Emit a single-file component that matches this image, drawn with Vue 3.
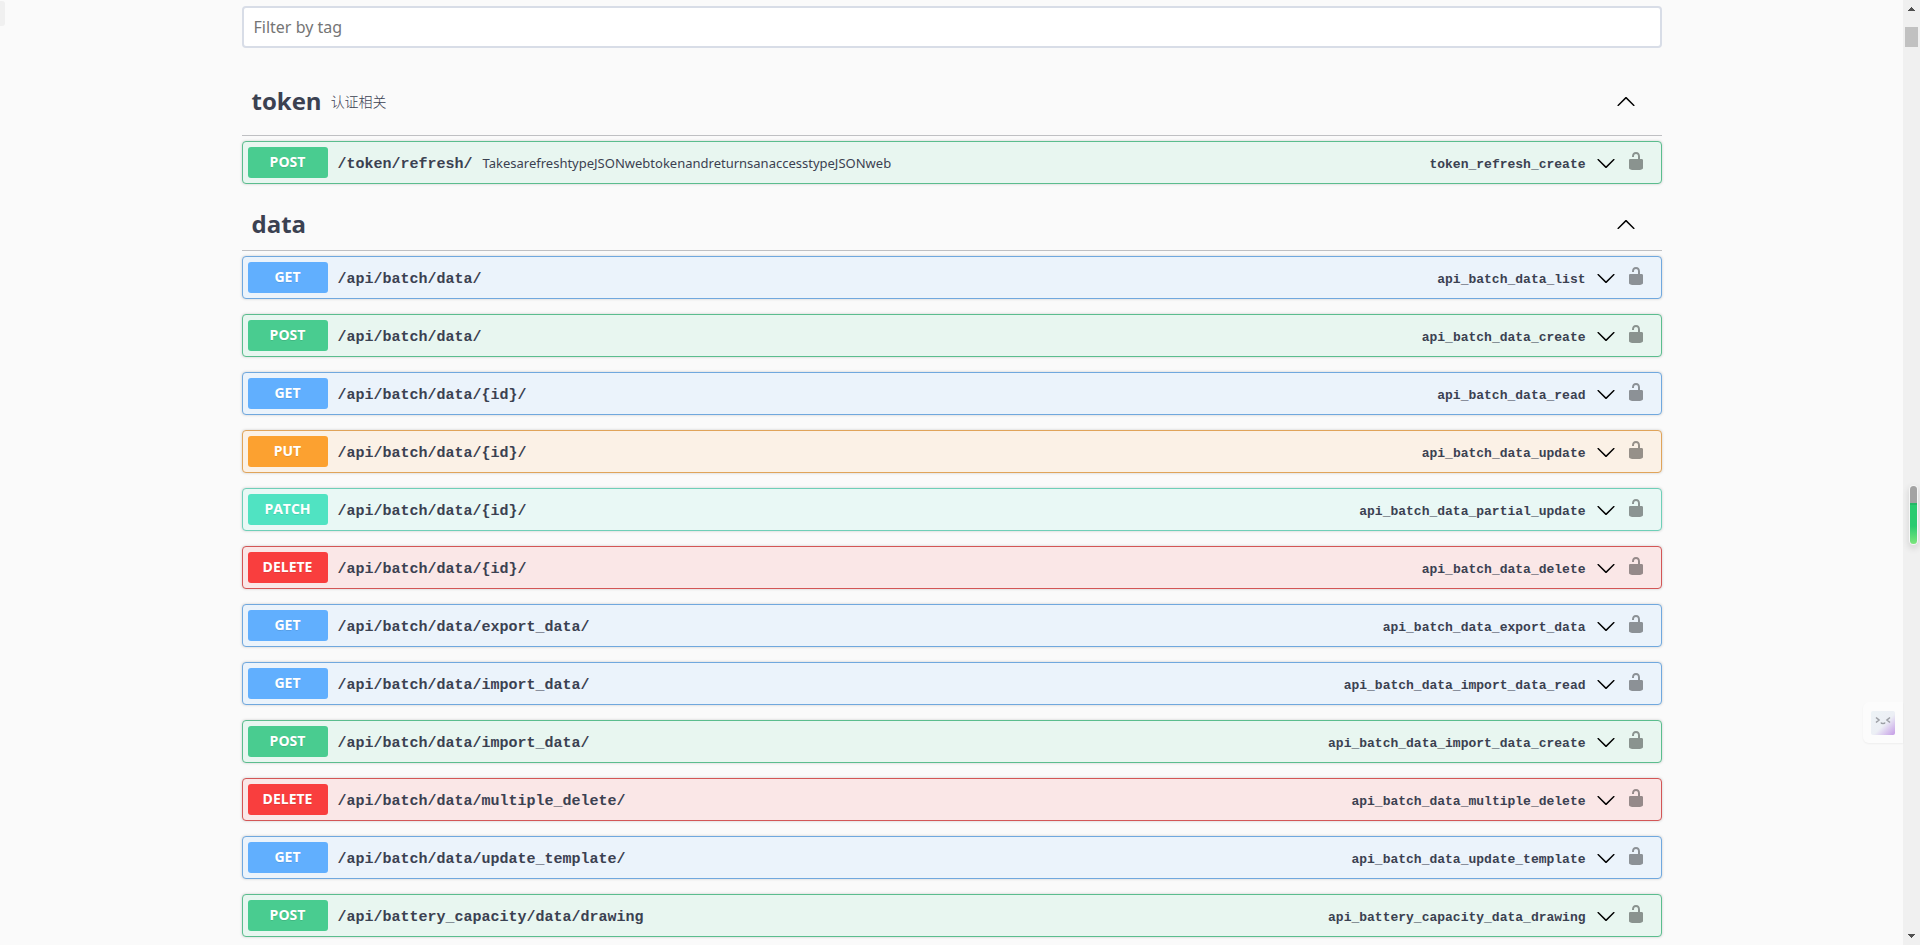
<script setup>
import { ref } from 'vue'

const filter = ref('')

const sections = [
  {
    name: 'token',
    note: '认证相关',
    ops: [
      {
        method: 'post',
        path: '/token/refresh/',
        summary: 'TakesarefreshtypeJSONwebtokenandreturnsanaccesstypeJSONweb',
        id: 'token_refresh_create',
      },
    ],
  },
  {
    name: 'data',
    note: '',
    ops: [
      { method: 'get', path: '/api/batch/data/', id: 'api_batch_data_list' },
      { method: 'post', path: '/api/batch/data/', id: 'api_batch_data_create' },
      { method: 'get', path: '/api/batch/data/{id}/', id: 'api_batch_data_read' },
      { method: 'put', path: '/api/batch/data/{id}/', id: 'api_batch_data_update' },
      { method: 'patch', path: '/api/batch/data/{id}/', id: 'api_batch_data_partial_update' },
      { method: 'delete', path: '/api/batch/data/{id}/', id: 'api_batch_data_delete' },
      { method: 'get', path: '/api/batch/data/export_data/', id: 'api_batch_data_export_data' },
      { method: 'get', path: '/api/batch/data/import_data/', id: 'api_batch_data_import_data_read' },
      { method: 'post', path: '/api/batch/data/import_data/', id: 'api_batch_data_import_data_create' },
      { method: 'delete', path: '/api/batch/data/multiple_delete/', id: 'api_batch_data_multiple_delete' },
      { method: 'get', path: '/api/batch/data/update_template/', id: 'api_batch_data_update_template' },
      { method: 'post', path: '/api/battery_capacity/data/drawing', id: 'api_battery_capacity_data_drawing' },
    ],
  },
]
</script>

<template>
  <div class="page">
    <main class="content">
      <input v-model="filter" class="filter" type="text" placeholder="Filter by tag" aria-label="Filter by tag" />

      <section v-for="s in sections" :key="s.name" class="tag-section">
        <header class="tag" :class="{ noted: s.note }">
          <h3 class="tag-name">{{ s.name }}</h3>
          <p v-if="s.note" class="tag-note">{{ s.note }}</p>
          <button class="icon-btn tag-toggle" type="button" :aria-label="'Collapse ' + s.name">
            <svg width="20" height="20" viewBox="0 0 20 20" aria-hidden="true">
              <path d="M17.418 14.908c.272.268.709.268.979 0s.271-.701 0-.969l-7.908-7.83c-.27-.268-.707-.268-.979 0l-7.908 7.83c-.27.268-.27.701 0 .969.271.268.709.268.979 0L10 7.767l7.418 7.141z" />
            </svg>
          </button>
        </header>

        <div class="ops">
          <div v-for="op in s.ops" :key="op.id" class="op" :class="op.method">
            <button class="summary" type="button">
              <span class="method">{{ op.method.toUpperCase() }}</span>
              <span class="path">{{ op.path }}</span>
              <span class="description">{{ op.summary }}</span>
              <span class="op-id">{{ op.id }}</span>
              <svg class="arrow" width="20" height="20" viewBox="0 0 20 20" aria-hidden="true">
                <path d="M17.418 6.109c.272-.268.709-.268.979 0s.271.701 0 .969l-7.908 7.83c-.27.268-.707.268-.979 0l-7.908-7.83c-.27-.268-.27-.701 0-.969.271-.268.709-.268.979 0L10 13.25l7.418-7.141z" />
              </svg>
            </button>
            <button class="icon-btn lock" type="button" :aria-label="'Authorize ' + op.id">
              <svg width="20" height="20" viewBox="0 0 20 20" aria-hidden="true">
                <path d="M15.8 8H14V5.6C14 2.703 12.665 1 10 1 7.334 1 6 2.703 6 5.6V6h2v-.801C8 3.754 8.797 3 10 3c1.203 0 2 .754 2 2.199V8H4c-.553 0-1 .646-1 1.199V17c0 .549.428 1.139.951 1.307l1.197.387C5.672 18.861 6.55 19 7.1 19h5.8c.549 0 1.428-.139 1.951-.307l1.196-.387c.524-.167.953-.757.953-1.306V9.199C17 8.646 16.352 8 15.8 8z" />
              </svg>
            </button>
          </div>
        </div>
      </section>
    </main>

    <div class="scrollbar" aria-hidden="true">
      <div class="scroll-top">
        <svg width="7" height="4" viewBox="0 0 7 4"><path d="M3 0h1v1h1v1h1v1h1v1H0V3h1V2h1V1h1z" fill="#505050" /></svg>
        <div class="thumb"></div>
      </div>
      <svg width="7" height="4" viewBox="0 0 7 4"><path d="M0 0h7v1H6v1H5v1H4v1H3V3H2V2H1V1H0z" fill="#505050" /></svg>
    </div>

    <div class="edge-tab"></div>
    <div class="gauge"></div>
    <div class="assistant">
      <svg width="24" height="24" viewBox="0 0 24 24" aria-hidden="true">
        <defs>
          <linearGradient id="face" x1="0" y1="0" x2="1" y2="1">
            <stop offset="0" stop-color="#edf3f6" />
            <stop offset="0.55" stop-color="#eceff5" />
            <stop offset="1" stop-color="#c49ae6" />
          </linearGradient>
        </defs>
        <rect width="24" height="24" rx="2" fill="url(#face)" />
        <path d="M5 6.5l3 2.5-3 2.5M19 6.5L16 9l3 2.5M10 11.5c.5 1.4 3.5 1.4 4 0" fill="none" stroke="#9c9fa5" stroke-width="1.6" />
      </svg>
    </div>
  </div>
</template>

<style>
body {
  background: #fafafa;
}
</style>

<style scoped>
.page {
  position: relative;
  display: flex;
  height: 100vh;
  overflow: hidden;
  box-sizing: border-box;
  background: #fafafa;
  color: #3b4151;
  font-family: "Open Sans", "Noto Sans CJK SC", sans-serif;
}
.content {
  flex: 1;
  min-width: 0;
  max-width: 1420px;
  margin: 0 auto;
  padding: 6px 20px 0;
}
.filter {
  display: block;
  box-sizing: border-box;
  width: 100%;
  height: 42px;
  margin-bottom: 20px;
  padding: 0 10px;
  border: 2px solid #d8dde7;
  border-radius: 4px;
  background: #fff;
  color: #3b4151;
  font: 16px "Noto Sans", sans-serif;
}
.filter::placeholder {
  color: #757575;
  opacity: 1;
}
.tag {
  display: flex;
  align-items: center;
  box-sizing: border-box;
  height: 52px;
  margin-bottom: 5px;
  padding: 0 26px 2px 10px;
  border-bottom: 1px solid #bfc0c3;
}
.tag.noted {
  height: 68px;
}
.tag-name {
  margin: 0;
  font-size: 24px;
  line-height: 32px;
  font-weight: 700;
}
.tag-note {
  margin: 0;
  padding-left: 9px;
  font-family: "Noto Sans CJK SC", sans-serif;
  font-size: 14px;
  font-weight: 300;
  line-height: 20px;
}
.icon-btn {
  display: flex;
  padding: 0;
  border: 0;
  background: none;
  cursor: pointer;
}
.tag-toggle {
  margin-left: auto;
}
.ops {
  display: flex;
  flex-direction: column;
  gap: 15px;
  margin-bottom: 15px;
}
.op {
  display: flex;
  align-items: center;
  box-sizing: border-box;
  height: 43px;
  padding: 0 15px 0 5px;
  border: 1px solid;
  border-radius: 4px;
  box-shadow: 0 0 3px rgba(0, 0, 0, 0.19);
}
.summary {
  display: flex;
  flex: 1;
  align-items: center;
  min-width: 0;
  padding: 0;
  border: 0;
  background: none;
  color: #3b4151;
  font-family: inherit;
  text-align: left;
  cursor: pointer;
}
.method {
  width: 80px;
  padding-bottom: 2px;
  border-radius: 3px;
  color: #fff;
  font-size: 14px;
  font-weight: 700;
  line-height: 29px;
  text-align: center;
  text-shadow: 0 1px 0 rgba(0, 0, 0, 0.1);
}
.path {
  padding: 3px 10px 0;
  font-family: "Liberation Mono", monospace;
  font-size: 15px;
  font-weight: 700;
}
.description {
  flex: 1;
  font-family: "Noto Sans", sans-serif;
  font-size: 13px;
}
.op-id {
  padding: 3px 10px 0 0;
  font-family: "Liberation Mono", monospace;
  font-size: 13px;
  font-weight: 700;
}
.lock {
  margin-left: 10px;
  padding-bottom: 3px;
  opacity: 0.4;
}
.get { border-color: #70a8de; background: #ebf3fb; }
.get .method { background: #61affe; }
.post { border-color: #5bbd8e; background: #e8f6f0; }
.post .method { background: #49cc90; }
.put { border-color: #e0a45a; background: #fbf1e6; }
.put .method { background: #fca130; }
.patch { border-color: #6fcfb8; background: #e9f8f5; }
.patch .method { background: #50e3c2; }
.delete { border-color: #d35656; background: #fae7e7; }
.delete .method { background: #f93e3e; }

.scrollbar {
  display: flex;
  flex-direction: column;
  align-items: center;
  justify-content: space-between;
  box-sizing: border-box;
  width: 17px;
  padding: 7px 0;
  background: #f0f0f0;
}
.scroll-top {
  display: flex;
  flex-direction: column;
  align-items: center;
  gap: 16px;
}
.thumb {
  width: 13px;
  height: 20px;
  background: #c1c1c1;
}
.edge-tab {
  position: absolute;
  top: 1px;
  left: 0;
  width: 5px;
  height: 25px;
  border-radius: 0 3px 3px 0;
  background: #f0f0f0;
}
.gauge {
  position: absolute;
  top: 486px;
  right: 3px;
  width: 7px;
  height: 58px;
  border-radius: 4px;
  background: linear-gradient(#a3a3a3 0 17px, #25b866 17px 19px, #2acb70 19px 40px, #7be67c);
  box-shadow: 0 0 0 1px #f6f6f6, 0 3px 6px 2px rgba(0, 0, 0, 0.1);
}
.assistant {
  position: absolute;
  top: 702px;
  right: 17px;
  box-sizing: border-box;
  width: 40px;
  height: 41px;
  padding: 9px 8px;
  border-radius: 6px 0 0 6px;
  background: #fcfcfc;
  box-shadow: 0 1px 2px rgba(0, 0, 0, 0.05);
}
</style>
